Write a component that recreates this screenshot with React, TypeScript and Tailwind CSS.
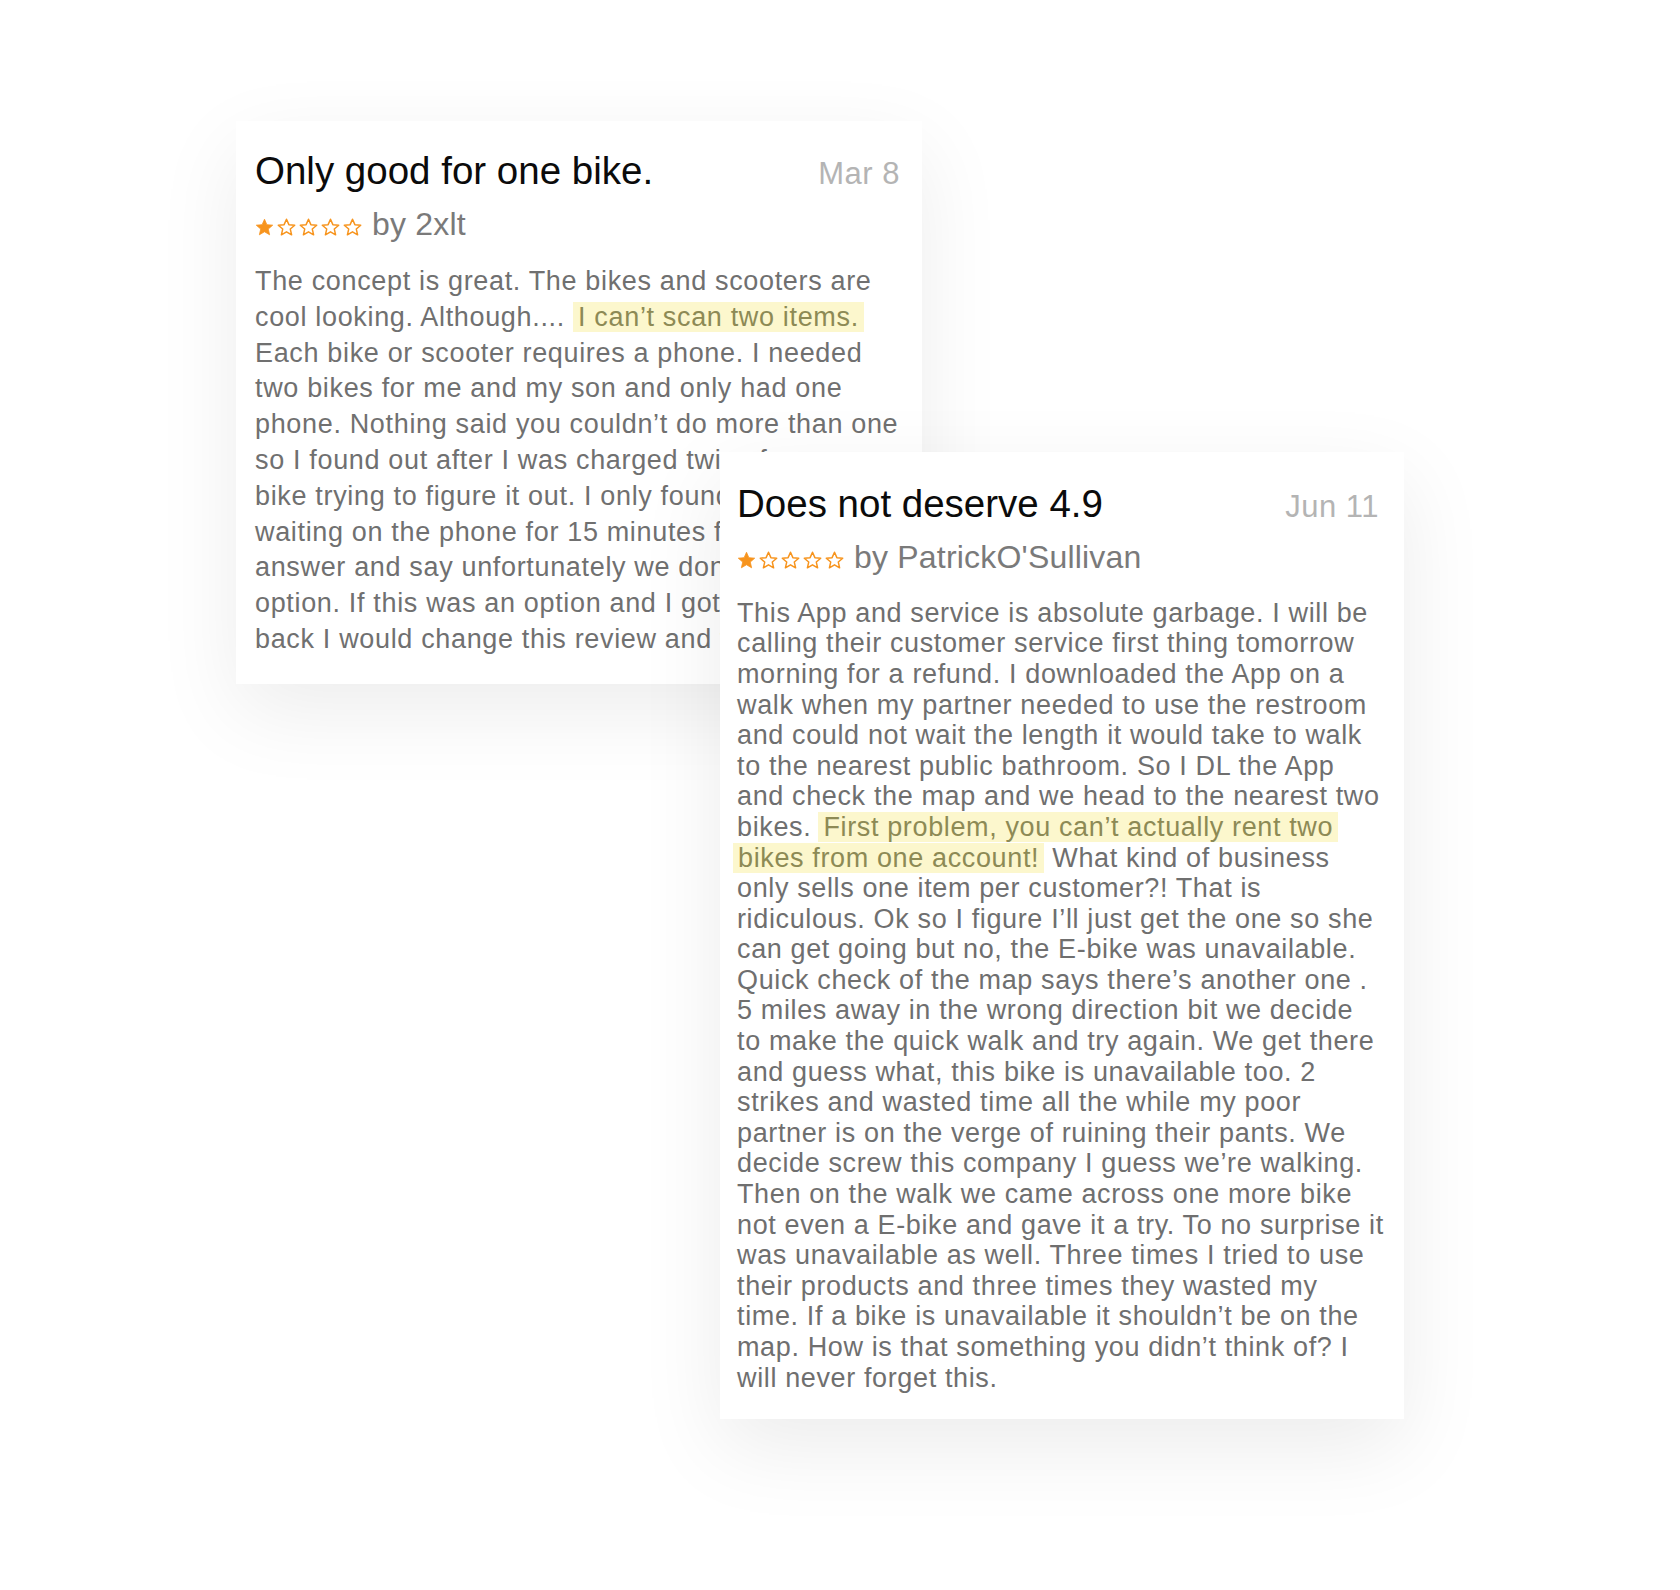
import React from "react";

const ORANGE = "#f7941d";

function Star({ filled }: { filled: boolean }) {
  return (
    <svg width="19" height="18" viewBox="0 0 24 23" className="block">
      <path
        d="M12 1.6l3.05 6.9 7.45.68-5.65 4.95 1.68 7.35L12 17.6l-6.53 3.88 1.68-7.35L1.5 9.18l7.45-.68z"
        fill={filled ? ORANGE : "none"}
        stroke={ORANGE}
        strokeWidth={filled ? 1 : 1.9}
        strokeLinejoin="round"
      />
    </svg>
  );
}

function Stars() {
  return (
    <span className="inline-flex gap-[3px] self-end mb-[6px]">
      <Star filled />
      <Star filled={false} />
      <Star filled={false} />
      <Star filled={false} />
      <Star filled={false} />
    </span>
  );
}

function Hl({ children, className = "" }: { children: React.ReactNode; className?: string }) {
  return (
    <span className={"bg-[#fcf7cd] text-[#8d8a55] px-[5px] " + className}>{children}</span>
  );
}

function Header({ title, date, author, gap }: { title: string; date: string; author: string; gap: string }) {
  return (
    <>
      <div className="flex items-baseline justify-between">
        <h2 className="text-[38.5px] leading-[44px] text-[#0b0b0b] font-normal">{title}</h2>
        <span className="text-[31px] leading-[44px] text-[#b4b4b4] tracking-[0.5px]">{date}</span>
      </div>
      <div className={"flex items-center gap-[10px] " + gap}>
        <Stars />
        <span className="text-[32px] leading-[36px] text-[#7a7a7a] tracking-[0.2px]">by {author}</span>
      </div>
    </>
  );
}

const card1Lines: React.ReactNode[] = [
  "The concept is great. The bikes and scooters are",
  <>
    cool looking. Although....{" "}
    <Hl>I can’t scan two items.</Hl>
  </>,
  "Each bike or scooter requires a phone. I needed",
  "two bikes for me and my son and only had one",
  "phone. Nothing said you couldn’t do more than one",
  "so I found out after I was charged twice for one",
  "bike trying to figure it out. I only found out after",
  "waiting on the phone for 15 minutes for them to",
  "answer and say unfortunately we don’t have that",
  "option. If this was an option and I got my money",
  "back I would change this review and the rating.",
];

const card2Lines: React.ReactNode[] = [
  "This App and service is absolute garbage. I will be",
  "calling their customer service first thing tomorrow",
  "morning for a refund. I downloaded the App on a",
  "walk when my partner needed to use the restroom",
  "and could not wait the length it would take to walk",
  "to the nearest public bathroom. So I DL the App",
  "and check the map and we head to the nearest two",
  <>
    bikes. <Hl className="-ml-[1px]">First problem, you can’t actually rent two</Hl>
  </>,
  <>
    <Hl className="-ml-[4px]">bikes from one account!</Hl> What kind of business
  </>,
  "only sells one item per customer?! That is",
  "ridiculous. Ok so I figure I’ll just get the one so she",
  "can get going but no, the E-bike was unavailable.",
  "Quick check of the map says there’s another one .",
  "5 miles away in the wrong direction bit we decide",
  "to make the quick walk and try again. We get there",
  "and guess what, this bike is unavailable too. 2",
  "strikes and wasted time all the while my poor",
  "partner is on the verge of ruining their pants. We",
  "decide screw this company I guess we’re walking.",
  "Then on the walk we came across one more bike",
  "not even a E-bike and gave it a try. To no surprise it",
  "was unavailable as well. Three times I tried to use",
  "their products and three times they wasted my",
  "time. If a bike is unavailable it shouldn’t be on the",
  "map. How is that something you didn’t think of? I",
  "will never forget this.",
];

export default function App() {
  return (
    <div
      className="w-[1680px] h-[1590px] bg-white overflow-hidden flex flex-col items-start"
      style={{ fontFamily: '"Liberation Sans", Arial, sans-serif' }}
    >
      <div className="ml-[236px] mt-[121px] w-[686px] bg-white pl-[19px] pr-[22px] pt-[28px] pb-[26px] shadow-[0_28px_80px_rgba(0,0,0,0.075)] overflow-hidden">
        <Header title="Only good for one bike." date="Mar 8" author="2xlt" gap="mt-[10px]" />
        <div className="mt-[22px] text-[27px] leading-[35.8px] text-[#707070] tracking-[0.66px] whitespace-nowrap">
          {card1Lines.map((l, i) => (
            <div key={i}>{l}</div>
          ))}
        </div>
      </div>
      <div className="relative z-10 ml-[720px] -mt-[232px] w-[684px] bg-white pl-[17px] pr-[25px] pt-[30px] pb-[26px] shadow-[0_28px_80px_rgba(0,0,0,0.08)]">
        <Header title="Does not deserve 4.9" date="Jun 11" author="PatrickO'Sullivan" gap="mt-[10px]" />
        <div className="mt-[23px] text-[27px] leading-[30.6px] text-[#6f6f6f] tracking-[0.63px] whitespace-nowrap">
          {card2Lines.map((l, i) => (
            <div key={i}>{l}</div>
          ))}
        </div>
      </div>
    </div>
  );
}
